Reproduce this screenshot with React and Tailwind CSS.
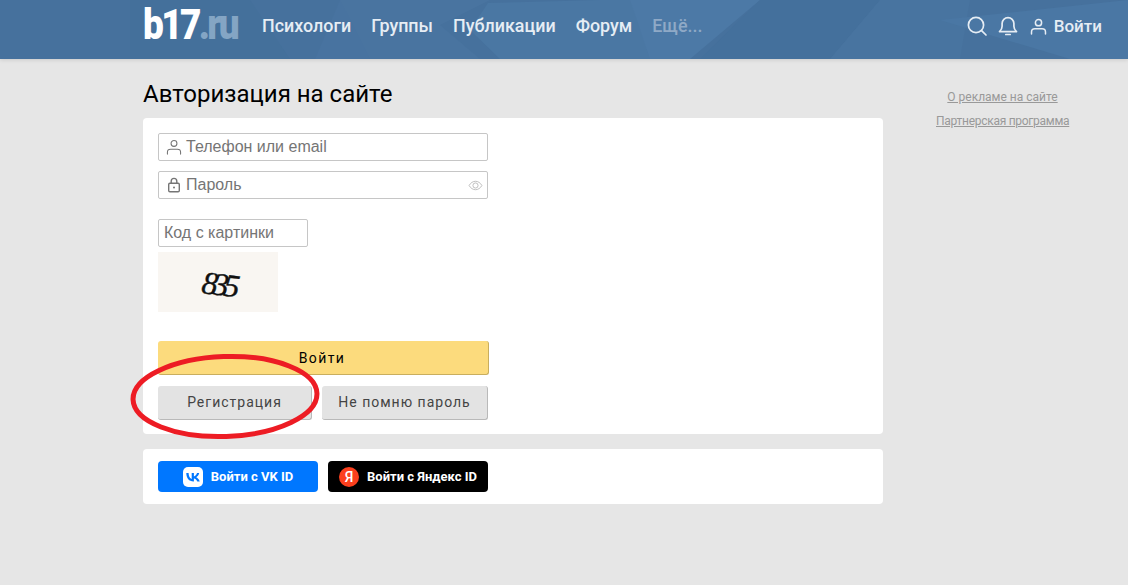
import React from "react";

const roboto = "font-['Roboto',sans-serif]";

function NavLink({ children, dim }) {
  return <a className={`text-[17.9px] leading-[20px] font-medium ${dim ? "text-[#8fa9c6]" : "text-[#e6edf4]"}`}>{children}</a>;
}

function UserIcon({ className, sw = 1.6 }) {
  return (
    <svg viewBox="0 0 18 18" fill="none" stroke="currentColor" strokeWidth={sw} className={className}>
      <circle cx="9" cy="5" r="3.3" />
      <path d="M1.6 17v-2.2c0-2 1.7-3.3 3.6-3.3h7.6c1.9 0 3.6 1.3 3.6 3.3V17" strokeLinecap="round" />
    </svg>
  );
}

function Field({ icon, placeholder, right, className = "w-[330px]", pad = "pl-[27px]" }) {
  return (
    <div className={`relative flex h-[28px] items-center rounded-[2px] border border-[#c6c6c6] bg-white ${className} ${pad}`}>
      {icon && <span className="absolute left-[7px] top-[5px] text-[#757575]">{icon}</span>}
      <span className="font-['Liberation_Sans',sans-serif] text-[16px] leading-[20px] text-[#757575]">{placeholder}</span>
      {right}
    </div>
  );
}

function Grey({ children, className }) {
  return (
    <button className={`flex h-[34px] items-center justify-center rounded-[3px] border-b border-r border-[#b9b9b9] bg-[#e3e3e3] pb-[1px] text-[14px] leading-none tracking-[1px] text-[#444] ${className}`}>
      {children}
    </button>
  );
}

export default function App() {
  return (
    <div className={`relative min-h-[585px] overflow-hidden bg-[#e6e6e6] ${roboto}`}>
      <header className="relative flex h-[59px] items-start overflow-hidden bg-[#46719d] pl-[143px] shadow-[0_1px_4px_rgba(0,0,0,0.12)]">
        <svg className="absolute inset-0 h-full w-full" viewBox="0 0 1128 59" preserveAspectRatio="none">
          <polygon points="130,0 250,0 290,59 130,59" fill="#44709b" />
          <polygon points="340,0 420,0 370,59 315,59" fill="#4873a0" />
          <polygon points="340,0 490,0 440,25 480,59 370,59" fill="#4974a0" />
          <polygon points="600,0 700,0 660,59 500,59 470,30 488,3" fill="#4a77a3" />
          <polygon points="630,0 760,0 690,59 650,59" fill="#4c79a6" />
          <polygon points="760,0 880,0 830,59 700,59" fill="#44709c" />
          <polygon points="880,0 970,0 960,59 830,59" fill="#4874a0" />
          <polygon points="940,20 1128,0 1128,59 1070,59" fill="#4a77a4" />
        </svg>
        <div className="relative flex h-[59px] w-[959px] items-start">
          <div className="mt-[3px] h-[44px] w-[96px]">
            <div className="w-fit origin-left scale-x-[0.88] whitespace-nowrap text-[42px] leading-[44px] font-black tracking-[-3px]">
              <span className="text-white">b17</span>
              <span className="text-[#84a5c4]">.ru</span>
            </div>
          </div>
          <nav className="ml-[23px] mt-[16px] flex gap-[20px]">
            <NavLink>Психологи</NavLink>
            <NavLink>Группы</NavLink>
            <NavLink>Публикации</NavLink>
            <NavLink>Форум</NavLink>
            <NavLink dim>Ещё...</NavLink>
          </nav>
          <div className="ml-auto mt-[16px] flex items-center text-[#e6edf4]">
            <svg viewBox="0 0 20 20" fill="none" stroke="currentColor" strokeWidth="1.7" className="h-[20px] w-[20px]">
              <circle cx="9" cy="9" r="7.6" />
              <path d="M14.6 14.6 19 19" strokeLinecap="round" />
            </svg>
            <svg viewBox="0 0 20 20" fill="none" stroke="currentColor" strokeWidth="1.7" className="ml-[11px] h-[20px] w-[20px]">
              <path d="M1.500 15.600c1.400-1.200 2.600-2.400 2.600-5.300V7.600a5.900 5.900 0 0 1 11.800 0v2.700c0 2.900 1.200 4.100 2.600 5.300z" strokeLinejoin="round" />
              <path d="M7.800 18.500h4.400" strokeLinecap="round" />
            </svg>
            <UserIcon className="ml-[12px] h-[19px] w-[17px]" sw={1.6} />
            <span className="ml-[7px] text-[17px] leading-[20px] font-medium">Войти</span>
          </div>
        </div>
      </header>

      <div className="flex pl-[143px]">
        <main className="w-[740px]">
          <h1 className="mt-[21px] text-[24px] leading-[28px] font-normal text-black">Авторизация на сайте</h1>
          <section className="mt-[10px] h-[316px] rounded-[4px] bg-white pl-[15px] pt-[15px]">
            <Field icon={<UserIcon className="h-[16px] w-[16px]" sw={1.2} />} placeholder="Телефон или email" />
            <Field
              className="mt-[10px] w-[330px]"
              icon={
                <svg viewBox="0 0 16 16" className="h-[16px] w-[16px]" fill="none" stroke="currentColor" strokeWidth="1.4">
                  <rect x="2.700" y="6.200" width="10.600" height="8.600" rx="1.200" />
                  <path d="M5.200 6V4.200a2.800 2.800 0 0 1 5.600 0V6" />
                  <circle cx="8" cy="10.500" r="1" fill="currentColor" stroke="none" />
                </svg>
              }
              placeholder="Пароль"
              right={
                <svg viewBox="0 0 16 12" className="absolute right-[4px] top-[8px] h-[11px] w-[15px] text-[#b3b3b3]" fill="none" stroke="currentColor" strokeWidth="0.9">
                  <path d="M1 6c1.800-3 4.200-4.600 7-4.600S13.200 3 15 6c-1.800 3-4.200 4.600-7 4.600S2.800 9 1 6z" />
                  <circle cx="8" cy="6" r="2.800" />
                </svg>
              }
            />
            <Field className="mt-[20px] w-[150px]" pad="pl-[5px]" placeholder="Код с картинки" />
            <div className="mt-[5px] flex h-[60px] w-[120px] items-center justify-center bg-[#f9f6f2] pt-[4px] font-['Liberation_Serif',serif] text-[32px] leading-none text-[#111] italic">
              <span className="inline-block rotate-[7deg] tracking-[-5px] [-webkit-text-stroke:0.4px_#111]">835</span>
            </div>
            <button className="mt-[29px] flex h-[34px] w-[331px] items-center justify-center rounded-[3px] border-b border-r border-[#c9ae5e] bg-[#fcdb7d] pr-[2px] text-[14px] leading-none tracking-[1.400px] text-black">
              Войти
            </button>
            <div className="mt-[11px] flex gap-[10px]">
              <Grey className="w-[154px]">Регистрация</Grey>
              <Grey className="w-[166px]">Не помню пароль</Grey>
            </div>
          </section>
          <section className="mt-[15px] flex h-[55px] items-center gap-[10px] rounded-[4px] bg-white pl-[15px]">
            <button className="flex h-[31px] w-[160px] items-center justify-center gap-[8px] rounded-[4px] bg-[#0077ff] text-[13px] leading-none font-bold text-white">
              <svg viewBox="0 0 20 20" className="h-[20px] w-[20px]">
                <rect width="20" height="20" rx="5" fill="#fff" />
                <path d="M10.600 14.500C6 14.500 3.400 11.400 3.300 6.100h2.300c.1 3.900 1.800 5.500 3.100 5.900V6.100h2.200v3.300c1.300-.1 2.700-1.600 3.100-3.300h2.200c-.4 2-1.900 3.600-3 4.200 1.100.5 2.800 1.800 3.500 4.200h-2.400c-.5-1.600-1.800-2.800-3.400-3v3z" fill="#0077ff" />
              </svg>
              Войти с VK ID
            </button>
            <button className="flex h-[31px] w-[160px] items-center justify-center gap-[8px] rounded-[4px] bg-black text-[13px] leading-none font-bold text-white">
              <span className="relative flex h-[20px] w-[20px] items-center justify-center rounded-full bg-[#fc3f1d] text-[14px] font-medium text-white">Я</span>
              Войти с Яндекс ID
            </button>
          </section>
        </main>
        <aside className="ml-[53px] mt-[31px] w-[133px] whitespace-nowrap text-center text-[12px] leading-[14px] text-[#999]">
          <a className="block underline">О рекламе на сайте</a>
          <a className="mt-[10px] block tracking-[-0.28px] underline">Партнерская программа</a>
        </aside>
      </div>

      <svg className="pointer-events-none absolute left-[128px] top-[350px] h-[92px] w-[194px]" viewBox="0 0 194 92" fill="none">
        <ellipse cx="97" cy="46.500" rx="92" ry="40" stroke="#ed1c24" strokeWidth="5" transform="rotate(-2 97 46.500)" />
      </svg>
    </div>
  );
}
